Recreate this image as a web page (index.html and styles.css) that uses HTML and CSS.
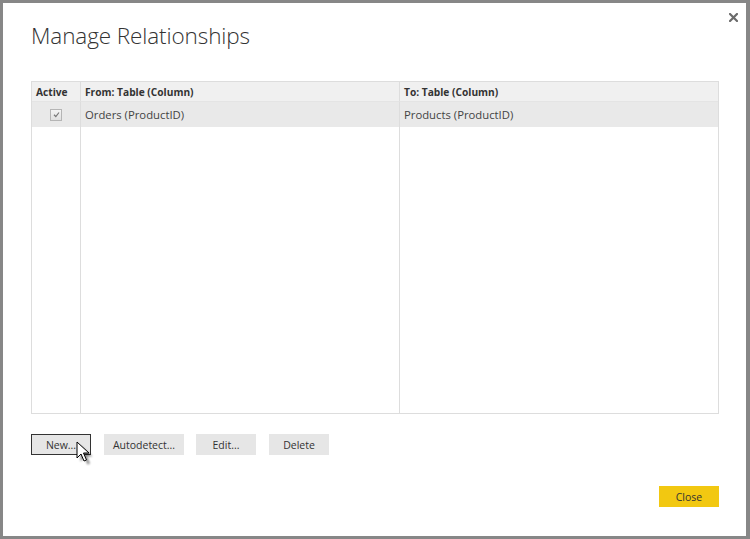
FILE: index.html
```html
<!DOCTYPE html>
<html>
<head>
<meta charset="utf-8">
<link rel="stylesheet" href="styles.css">
</head>
<body>
<div class="dialog">
  <button class="close-x" aria-label="Close">
    <svg width="9" height="9" viewBox="0 0 9 9"><path d="M1 1 L8 8 M8 1 L1 8" stroke="#6b6b6b" stroke-width="2.2" stroke-linecap="square"/></svg>
  </button>
  <h1 class="title">Manage Relationships</h1>
  <div class="grid">
    <div class="cell head c1">Active</div>
    <div class="cell head c2">From: Table (Column)</div>
    <div class="cell head c3">To: Table (Column)</div>
    <div class="cell row c1 center"><span class="check"><svg width="9" height="9" viewBox="0 0 9 9"><path d="M2 4.8 L3.8 6.5 L7 2.5" fill="none" stroke="#777" stroke-width="1.2"/></svg></span></div>
    <div class="cell row c2">Orders (ProductID)</div>
    <div class="cell row c3">Products (ProductID)</div>
    <div class="cell fill c1"></div>
    <div class="cell fill c2"></div>
    <div class="cell fill c3"></div>
  </div>
  <div class="actions">
    <button class="btn focused">New...
      <svg class="cursor" width="22" height="26" viewBox="0 0 22 26">
        <defs><filter id="sh" x="-50%" y="-50%" width="200%" height="200%"><feGaussianBlur stdDeviation="1.2"/></filter></defs>
        <path d="M3 3 L3 19 L7 15 L10 22 L12.5 21 L9.5 14 L15 14 Z" fill="#000" opacity="0.45" filter="url(#sh)" transform="translate(1.5,1.5)"/>
        <path d="M1 1 L1 17 L5 13 L8 20 L10.5 19 L7.5 12 L13 12 Z" fill="#fff" stroke="#000" stroke-width="1" stroke-linejoin="miter"/>
      </svg>
    </button>
    <button class="btn wide">Autodetect...</button>
    <button class="btn">Edit...</button>
    <button class="btn">Delete</button>
  </div>
  <div class="footer">
    <button class="btn primary">Close</button>
  </div>
</div>
</body>
</html>
```
FILE: styles.css
```css
html, body {
  margin: 0;
  padding: 0;
  background: #ffffff;
}
body {
  font-family: "Open Sans", "Noto Sans", sans-serif;
  color: #333333;
}
.dialog {
  position: relative;
  box-sizing: border-box;
  width: 750px;
  height: 539px;
  border-style: solid;
  border-color: #878787;
  border-width: 3px 4px 3px 3px;
  background: #ffffff;
  padding: 0 27px 0 28px;
  display: flex;
  flex-direction: column;
}
.close-x {
  position: absolute;
  top: 8px;
  right: 6px;
  width: 13px;
  height: 13px;
  padding: 2px;
  border: 0;
  background: transparent;
  display: flex;
  align-items: center;
  justify-content: center;
}
.title {
  margin: 18px 0 0 0;
  font-weight: 300;
  font-size: 22.5px;
  line-height: 30px;
  color: #333333;
  letter-spacing: -0.1px;
  height: 30px;
}
.grid {
  margin-top: 30px;
  height: 333px;
  box-sizing: border-box;
  border: 1px solid #dddddd;
  display: grid;
  grid-template-columns: 48px 319px 1fr;
  grid-template-rows: 20px 25px 1fr;
  font-size: 11.3px;
}
.cell {
  padding: 0 4px;
  display: flex;
  align-items: center;
  white-space: nowrap;
}
.c2, .c3 {
  border-left: 1px solid #dddddd;
}
.head {
  background: #f0f0f0;
  font-weight: 700;
  color: #333333;
  font-size: 10.2px;
  border-bottom: 1px solid #e4e4e4;
}
.head.c1 { padding-left: 4px; }
.row {
  background: #e9e9e9;
  color: #444444;
}
.center {
  justify-content: center;
  padding: 0;
}
.check {
  width: 10px;
  height: 10px;
  border: 1px solid #b5b5b5;
  background: linear-gradient(#f4f4f4, #e0e0e0);
  display: flex;
  align-items: center;
  justify-content: center;
}
.actions {
  margin-top: 20px;
  display: flex;
  gap: 13px;
}
.btn {
  position: relative;
  box-sizing: border-box;
  width: 60px;
  height: 21px;
  border: 0;
  background: #e6e6e6;
  font-family: "Open Sans", "Noto Sans", sans-serif;
  font-size: 10.5px;
  color: #333333;
  padding: 0;
  margin: 0;
}
.btn.wide { width: 80px; margin-right: -1px; }
.btn.focused {
  border: 1px solid #333333;
}
.cursor {
  position: absolute;
  left: 44px;
  top: 6px;
}
.footer {
  margin-top: 31px;
  display: flex;
  justify-content: flex-end;
}
.btn.primary {
  background: #f2c811;
  color: #333333;
}
```
